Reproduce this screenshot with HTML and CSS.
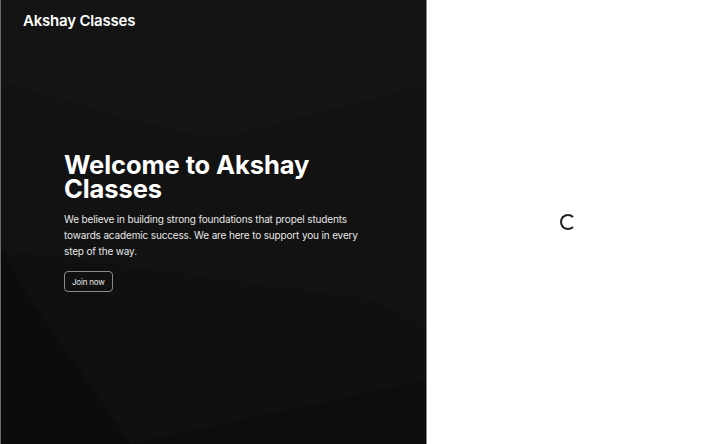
FILE: index.html
```html
<!DOCTYPE html>
<html lang="en">
<head>
<meta charset="utf-8">
<title>Akshay Classes</title>
<link rel="stylesheet" href="styles.css">
</head>
<body>
<div class="page">
  <section class="hero">
    <svg class="hero-bg" viewBox="0 0 426 444" preserveAspectRatio="none" aria-hidden="true">
      <rect x="0" y="0" width="426" height="444" fill="#111111"/>
      <polygon points="0,0 426,0 426,86 300,118 215,140 120,118 0,82" fill="#141414"/>
      <polygon points="0,82 120,118 215,140 300,118 426,86 426,330 370,300 0,250" fill="#121212"/>
      <polygon points="0,250 370,300 426,330 426,380 150,440 130,444 30,300" fill="#101010"/>
      <polygon points="0,250 30,300 130,444 0,444" fill="#0c0c0c"/>
      <polygon points="150,440 426,380 426,444 130,444" fill="#0d0d0d"/>
    </svg>
    <header class="brand">Akshay Classes</header>
    <div class="hero-body">
      <h1 class="title">Welcome to Akshay Classes</h1>
      <p class="lead">We believe in building strong foundations that propel students towards academic success. We are here to support you in every step of the way.</p>
      <button class="join">Join now</button>
    </div>
  </section>
  <section class="side">
    <span class="spinner"></span>
  </section>
</div>
</body>
</html>
```
FILE: styles.css
```css
* { box-sizing: border-box; }
html, body { margin: 0; height: 100%; }
body {
  font-family: Inter, "Noto Sans", "Liberation Sans", sans-serif;
  background: #ffffff;
}
.page {
  display: flex;
  height: 444px;
}
.hero {
  position: relative;
  width: 427px;
  flex: 0 0 427px;
  border-left: 1px solid #6a6a6a;
  border-right: 1px solid #8a8a8a;
  color: #ffffff;
  display: flex;
  flex-direction: column;
  overflow: hidden;
}
.hero-bg {
  position: absolute;
  inset: 0;
  width: 100%;
  height: 100%;
  z-index: 0;
}
.brand {
  position: relative;
  z-index: 1;
  padding: 12px 0 0 22px;
  font-size: 15px;
  font-weight: 600;
  letter-spacing: -0.2px;
  line-height: 18px;
}
.hero-body {
  position: relative;
  z-index: 1;
  flex: 1;
  display: flex;
  flex-direction: column;
  justify-content: center;
  padding: 0 60px 0 63px;
  margin-top: -29px;
}
.title {
  margin: 0;
  font-size: 25.5px;
  font-weight: 700;
  letter-spacing: -0.1px;
  line-height: 24px;
}
.lead {
  margin: 10px 0 0;
  font-size: 10px;
  line-height: 16px;
  color: #e6e6e6;
  letter-spacing: -0.15px;
}
.join {
  align-self: flex-start;
  margin-top: 12px;
  height: 21px;
  padding: 0 7px;
  background: transparent;
  color: #e8e8e8;
  border: 1px solid #8a8a8a;
  border-radius: 4px;
  font-family: inherit;
  font-size: 8px;
  font-weight: 400;
  letter-spacing: -0.2px;
}
.side {
  flex: 1;
  display: flex;
  align-items: center;
  justify-content: center;
}
.spinner {
  width: 16px;
  height: 16px;
  border: 2px solid #222222;
  border-right-color: transparent;
  border-radius: 50%;
  margin-left: -3px;
}
```
